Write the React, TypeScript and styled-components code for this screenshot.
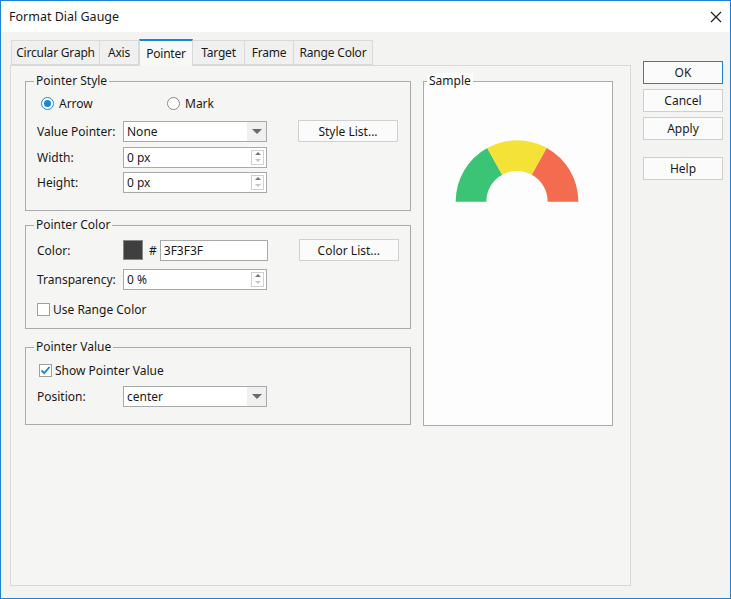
import React from "react";
import styled, { createGlobalStyle } from "styled-components";

const Global = createGlobalStyle`
  html, body { margin: 0; padding: 0; }
  body { font-family: "Noto Sans", "Liberation Sans", sans-serif; font-size: 12px; color: #1a1a1a; }
`;

const Window = styled.div`
  width: 731px;
  height: 599px;
  box-sizing: border-box;
  border: 1px solid #1c84d6;
  background: #f3f3f2;
  position: relative;
  overflow: hidden;
`;

const TitleBar = styled.div`
  height: 31px;
  background: #fff;
  display: flex;
  align-items: center;
  justify-content: space-between;
  padding: 0 8px;
  font-size: 12.5px;
`;

const Body = styled.div`
  display: flex;
  padding: 7px 0 0 9px;
  gap: 12px;
`;

const TabsCol = styled.div`
  display: flex;
  flex-direction: column;
`;

const TabRow = styled.div`
  display: flex;
  height: 26px;
  align-items: flex-end;
  padding-left: 1px;
`;

const Tab = styled.div<{ $active?: boolean; $w: number }>`
  width: ${({ $w }) => $w}px;
  height: ${({ $active }) => ($active ? "27px" : "25px")};
  box-sizing: border-box;
  display: flex;
  align-items: center;
  justify-content: center;
  letter-spacing: -0.2px;
  white-space: nowrap;
  border: 1px solid #d9d9d9;
  border-left-width: ${({ $active }) => ($active ? "1px" : "0")};
  border-bottom: ${({ $active }) => ($active ? "none" : "1px solid #d9d9d9")};
  border-top: ${({ $active }) => ($active ? "2px solid #1c84d6" : "1px solid #d9d9d9")};
  background: ${({ $active }) => ($active ? "#f8f8f6" : "#f0f0f0")};
  margin-bottom: ${({ $active }) => ($active ? "-1px" : "0")};
  position: relative;
  z-index: ${({ $active }) => ($active ? 1 : 0)};
  &:first-child { border-left-width: 1px; }
`;

const Panel = styled.div`
  width: 621px;
  height: 521px;
  box-sizing: border-box;
  border: 1px solid #d9d9d9;
  background: #f5f5f3;
  display: flex;
  gap: 12px;
  padding: 15px 0 0 14px;
`;

const LeftCol = styled.div`
  width: 386px;
  display: flex;
  flex-direction: column;
`;

const Group = styled.div<{ $h: number; $mt?: number; $white?: boolean }>`
  position: relative;
  height: ${({ $h }) => $h}px;
  margin-top: ${({ $mt }) => $mt ?? 0}px;
  box-sizing: border-box;
  border: 1px solid #ababab;
  background: ${({ $white }) => ($white ? "#fcfdfc" : "transparent")};
  padding: 0 0 0 11px;
`;

const Legend = styled.div<{ $left?: number }>`
  position: absolute;
  top: -9px;
  left: ${({ $left }) => $left ?? 8}px;
  padding: 0 2px;
  background: #f5f5f3;
  line-height: 16px;
`;

const Row = styled.div<{ $mt: number }>`
  display: flex;
  align-items: center;
  height: 20px;
  margin-top: ${({ $mt }) => $mt}px;
`;

const Label = styled.div`
  width: 86px;
`;

const Field = styled.div<{ $w?: number }>`
  width: ${({ $w }) => $w ?? 144}px;
  height: 21px;
  box-sizing: border-box;
  border: 1px solid #a9a9a9;
  background: #fff;
  display: flex;
  align-items: center;
  padding-left: 3px;
  position: relative;
`;

const Arrow = styled.div`
  position: absolute;
  right: 0;
  top: 0;
  bottom: 0;
  width: 19px;
  background: #f0f0f0;
  display: flex;
  align-items: center;
  justify-content: center;
  &::after {
    content: "";
    border-left: 5px solid transparent;
    border-right: 5px solid transparent;
    border-top: 5px solid #6a6a6a;
  }
`;

const Spin = styled.div`
  position: absolute;
  right: 2px;
  top: 2px;
  width: 13px;
  height: 15px;
  border: 1px solid #d0d0d0;
  box-sizing: border-box;
  display: flex;
  flex-direction: column;
  align-items: center;
  justify-content: space-around;
  &::before {
    content: "";
    border-left: 3px solid transparent;
    border-right: 3px solid transparent;
    border-bottom: 3px solid #777;
  }
  &::after {
    content: "";
    border-left: 3px solid transparent;
    border-right: 3px solid transparent;
    border-top: 3px solid #c5c5c5;
  }
`;

const SideButton = styled.div`
  margin-left: 31px;
  width: 100px;
  height: 22px;
  box-sizing: border-box;
  border: 1px solid #d0d0d0;
  background: #fbfbfb;
  display: flex;
  align-items: center;
  justify-content: center;
`;

const Radio = styled.span<{ $on?: boolean }>`
  width: 13px;
  height: 13px;
  box-sizing: border-box;
  border-radius: 50%;
  border: 1px solid ${({ $on }) => ($on ? "#1c84d6" : "#8a8a8a")};
  background: #fff;
  display: inline-flex;
  align-items: center;
  justify-content: center;
  margin-right: 5px;
  &::after {
    content: "";
    width: 7px;
    height: 7px;
    border-radius: 50%;
    background: ${({ $on }) => ($on ? "#1c84d6" : "transparent")};
  }
`;

const Check = styled.span`
  width: 13px;
  height: 13px;
  box-sizing: border-box;
  border: 1px solid #a0a0a0;
  background: #fff;
  display: inline-flex;
  align-items: center;
  justify-content: center;
  margin-right: 3px;
`;

const Option = styled.div<{ $w?: number }>`
  display: flex;
  align-items: center;
  width: ${({ $w }) => $w ?? "auto"}px;
`;

const Swatch = styled.div`
  width: 20px;
  height: 20px;
  box-sizing: border-box;
  border: 1px solid #888;
  background: #3f3f3f;
  margin-right: 6px;
`;

const Sample = styled(Group)`
  width: 190px;
  height: 345px;
  padding: 0;
  display: flex;
  justify-content: center;
`;

const Buttons = styled.div`
  display: flex;
  flex-direction: column;
  padding-top: 22px;
`;

const DlgButton = styled.div<{ $primary?: boolean; $mt?: number }>`
  width: 80px;
  height: 23px;
  box-sizing: border-box;
  margin-top: ${({ $mt }) => $mt ?? 0}px;
  border: 1px solid ${({ $primary }) => ($primary ? "#1c84d6" : "#cfcfcf")};
  background: #fbfbfb;
  display: flex;
  align-items: center;
  justify-content: center;
`;

const CloseIcon = () => (
  <svg width="12" height="12" viewBox="0 0 12 12">
    <path d="M1 1 L11 11 M11 1 L1 11" stroke="#222" strokeWidth="1.3" />
  </svg>
);

const CheckMark = () => (
  <svg width="11" height="11" viewBox="0 0 11 11">
    <path d="M1.5 5.5 L4.2 8.2 L9.5 2" fill="none" stroke="#1c84d6" strokeWidth="1.8" />
  </svg>
);

const arc = (cx: number, cy: number, r1: number, r2: number, a1: number, a2: number) => {
  const p = (r: number, a: number) => {
    const t = (a * Math.PI) / 180;
    return `${cx + r * Math.cos(t)} ${cy - r * Math.sin(t)}`;
  };
  return `M${p(r2, a1)} A${r2} ${r2} 0 0 1 ${p(r2, a2)} L${p(r1, a2)} A${r1} ${r1} 0 0 0 ${p(r1, a1)} Z`;
};

const Gauge = () => (
  <svg width="190" height="140" viewBox="0 0 190 140" style={{ marginTop: 20 }}>
    <path d={arc(94, 100, 31, 62, 180, 119)} fill="#3cc476" />
    <path d={arc(94, 100, 31, 62, 119, 61)} fill="#f5e236" />
    <path d={arc(94, 100, 31, 62, 61, 0)} fill="#f46c50" />
  </svg>
);

const tabs: [string, number][] = [
  ["Circular Graph", 89],
  ["Axis", 39],
  ["Pointer", 54],
  ["Target", 52],
  ["Frame", 49],
  ["Range Color", 79],
];

export default function App() {
  return (
    <Window>
      <Global />
      <TitleBar>
        <span>Format Dial Gauge</span>
        <CloseIcon />
      </TitleBar>
      <Body>
        <TabsCol>
          <TabRow>
            {tabs.map(([t, w]) => (
              <Tab key={t} $w={w} $active={t === "Pointer"}>{t}</Tab>
            ))}
          </TabRow>
          <Panel>
            <LeftCol>
              <Group $h={130}>
                <Legend>Pointer Style</Legend>
                <Row $mt={11} style={{ paddingLeft: 4 }}>
                  <Option $w={126}><Radio $on />Arrow</Option>
                  <Option><Radio />Mark</Option>
                </Row>
                <Row $mt={8}>
                  <Label>Value Pointer:</Label>
                  <Field>None<Arrow /></Field>
                  <SideButton>Style List...</SideButton>
                </Row>
                <Row $mt={6}>
                  <Label>Width:</Label>
                  <Field>0 px<Spin /></Field>
                </Row>
                <Row $mt={5}>
                  <Label>Height:</Label>
                  <Field>0 px<Spin /></Field>
                </Row>
              </Group>
              <Group $h={104} $mt={14}>
                <Legend>Pointer Color</Legend>
                <Row $mt={14}>
                  <Label>Color:</Label>
                  <Swatch />
                  <span style={{ marginRight: 3 }}>#</span>
                  <Field $w={108}>3F3F3F</Field>
                  <SideButton>Color List...</SideButton>
                </Row>
                <Row $mt={9}>
                  <Label>Transparency:</Label>
                  <Field>0 %<Spin /></Field>
                </Row>
                <Row $mt={10}>
                  <Option><Check />Use Range Color</Option>
                </Row>
              </Group>
              <Group $h={78} $mt={18}>
                <Legend>Pointer Value</Legend>
                <Row $mt={12} style={{ paddingLeft: 2 }}>
                  <Option><Check><CheckMark /></Check>Show Pointer Value</Option>
                </Row>
                <Row $mt={6}>
                  <Label>Position:</Label>
                  <Field>center<Arrow /></Field>
                </Row>
              </Group>
            </LeftCol>
            <Sample $h={345} $white>
              <Legend $left={3} style={{ background: "#fcfdfc" }}>Sample</Legend>
              <Gauge />
            </Sample>
          </Panel>
        </TabsCol>
        <Buttons>
          <DlgButton $primary>OK</DlgButton>
          <DlgButton $mt={5}>Cancel</DlgButton>
          <DlgButton $mt={5}>Apply</DlgButton>
          <DlgButton $mt={17}>Help</DlgButton>
        </Buttons>
      </Body>
    </Window>
  );
}
